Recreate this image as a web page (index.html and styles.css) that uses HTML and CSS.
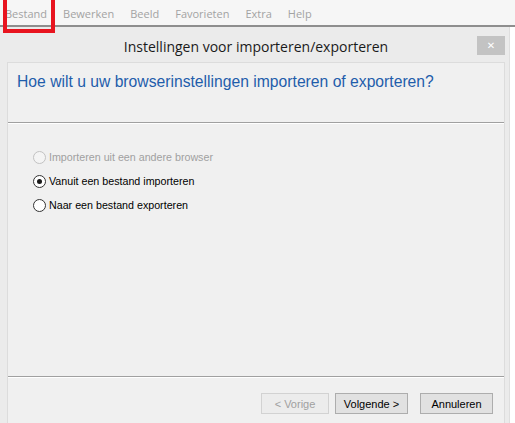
FILE: index.html
```html
<!DOCTYPE html>
<html lang="nl">
<head>
    <meta charset="UTF-8">
    <title>Instellingen voor importeren/exporteren</title>
    <link rel="stylesheet" href="styles.css">
</head>
<body>
    <div class="menubar">
        <span class="menu-item first">Bestand</span>
        <span class="menu-item">Bewerken</span>
        <span class="menu-item">Beeld</span>
        <span class="menu-item">Favorieten</span>
        <span class="menu-item">Extra</span>
        <span class="menu-item">Help</span>
        <!-- annotation box over the first menu -->
        <div class="highlight"></div>
    </div>

    <div class="window">
        <div class="titlebar">
            <span></span>
            <span class="title">Instellingen voor importeren/exporteren</span>
            <button class="close" type="button">&#x2715;</button>
        </div>

        <div class="client">
            <div class="header">
                <h1>Hoe wilt u uw browserinstellingen importeren of exporteren?</h1>
            </div>

            <div class="options">
                <label class="option disabled"><span class="radio"></span>Importeren uit een andere browser</label>
                <label class="option"><span class="radio checked"></span>Vanuit een bestand importeren</label>
                <label class="option"><span class="radio"></span>Naar een bestand exporteren</label>
            </div>

            <div class="footer">
                <button class="btn prev" type="button" disabled>&lt; Vorige</button>
                <button class="btn" type="button">Volgende &gt;</button>
                <button class="btn cancel" type="button">Annuleren</button>
            </div>
        </div>
    </div>
</body>
</html>
```

FILE: styles.css
```css
/* Global Styles */
body {
    margin: 0;
    background: #ffffff;
    font-family: 'Liberation Sans', Arial, sans-serif;
    overflow: hidden;
}

/* Menu bar */
.menubar {
    position: relative;
    display: flex;
    gap: 16px;
    height: 27px;
    padding: 2px 0 0 5px;
    box-sizing: border-box;
    align-items: center;
    background: #f6f6f6;
    border-bottom: 2px solid #8e8e8e;
    font-family: 'Open Sans', sans-serif;
    font-size: 11px;
    color: #a3a3a3;
}

.highlight {
    position: absolute;
    left: 3px;
    top: -4px;
    width: 44px;
    height: 29px;
    border: 4px solid #e8141f;
}

/* Dialog window */
.window {
    width: 498px;
    height: 396px;
    padding: 0 4px 0 7px;
    background: #ebebeb;
    border-right: 1px solid #dedede;
}

.titlebar {
    display: grid;
    grid-template-columns: 1fr auto 1fr;
    align-items: center;
    height: 35px;
}

.title {
    margin-top: 4px;
    font-family: 'Open Sans', sans-serif;
    font-size: 14px;
    color: #1a1a1a;
}

.close {
    justify-self: end;
    width: 28px;
    height: 19px;
    margin-top: 1px;
    border: none;
    padding: 0;
    background: #c3c3c3;
    color: #ffffff;
    font-size: 10px;
    font-weight: bold;
    font-family: 'DejaVu Sans', sans-serif;
}

.client {
    height: 360px;
    background: #f0f0f0;
    border: 1px solid #dcdcdc;
    border-bottom: none;
}

.header {
    height: 60px;
    padding: 9px 0 0 9px;
    box-sizing: border-box;
    border-bottom: 1px solid #a0a0a0;
    box-shadow: 0 1px 0 #ffffff;
}

.header h1 {
    margin: 0;
    font-size: 15.7px;
    font-weight: normal;
    line-height: 20px;
    color: #1f5dab;
}

/* Radio options */
.options {
    height: 254px;
    padding: 22px 0 0 25px;
    box-sizing: border-box;
    border-bottom: 1px solid #a0a0a0;
}

.option {
    display: flex;
    align-items: center;
    gap: 3px;
    height: 24px;
    font-size: 10.7px;
    color: #000000;
}

.option.disabled {
    color: #a0a0a0;
}

.radio {
    display: flex;
    align-items: center;
    justify-content: center;
    width: 11px;
    height: 11px;
    border: 1px solid #333333;
    border-radius: 50%;
    background: #ffffff;
}

.option.disabled .radio {
    border-color: #c2c2c2;
    background: #f4f4f4;
}

.radio.checked::after {
    content: "";
    width: 5px;
    height: 5px;
    border-radius: 50%;
    background: #1a1a1a;
}

/* Footer buttons */
.footer {
    display: flex;
    padding: 15px 0 0 253px;
    border-top: 1px solid #ffffff;
}

.btn {
    width: 73px;
    height: 21px;
    margin-right: 6px;
    padding: 0;
    background: #e1e1e1;
    border: 1px solid #adadad;
    font-family: 'Liberation Sans', Arial, sans-serif;
    font-size: 11px;
    color: #000000;
}

.btn.prev {
    width: 68px;
}

.btn:disabled {
    background: #ececec;
    border-color: #d2d2d2;
    color: #a0a0a0;
}

.btn.cancel {
    margin-left: 6px;
}
```
